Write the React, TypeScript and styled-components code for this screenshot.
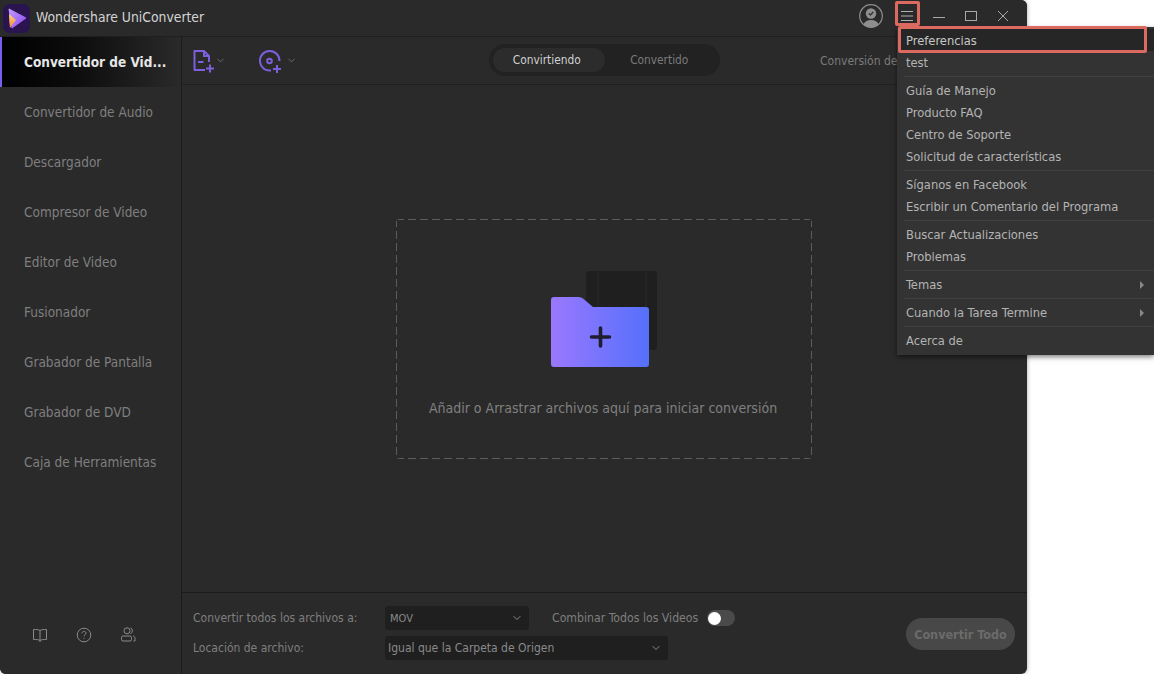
import React from "react";
import styled, { createGlobalStyle } from "styled-components";
import { ChevronDown } from "lucide-react";

const Global = createGlobalStyle`
  html, body { margin: 0; padding: 0; background: #fff; width: 1154px; height: 674px; overflow: hidden; }
  * { box-sizing: border-box; }
  body { font-family: "DejaVu Sans Condensed", "DejaVu Sans", "Noto Sans", sans-serif; font-stretch: condensed; }
`;

const Page = styled.div`
  position: relative;
  width: 1154px;
  height: 674px;
  overflow: hidden;
  background: #fff;
`;
const AppWindow = styled.div`
  width: 1027px;
  height: 674px;
  background: #2a2a2a;
  border-radius: 0 6px 6px 6px;
  box-shadow: 0 0 4px rgba(0, 0, 0, 0.35);
  display: flex;
  flex-direction: column;
  overflow: hidden;
`;
const TitleBar = styled.header`
  height: 37px;
  flex: none;
  display: flex;
  align-items: center;
  border-bottom: 1px solid #1f1f1f;
  background: #2a2a2a;
  color: #d4d4d4;
  font-size: 13.8px;
  padding-left: 2px;
`;
const AppName = styled.span`
  margin-left: 6px;
  flex: 1;
  position: relative;
  top: -1px;
`;
const WinControls = styled.div`
  display: flex;
  align-items: center;
  height: 36px;
  padding: 0 8px 4px 0;
`;
const CtlBtn = styled.div<{ $w: number }>`
  width: ${(p) => p.$w}px;
  height: 30px;
  display: flex;
  align-items: center;
  justify-content: center;
`;
const Body = styled.div`
  flex: 1;
  display: flex;
  min-height: 0;
`;
const Sidebar = styled.nav`
  width: 182px;
  flex: none;
  display: flex;
  flex-direction: column;
  border-right: 1px solid #1b1b1b;
  background: #2a2a2a;
`;
const NavItem = styled.div<{ $active?: boolean }>`
  height: 50px;
  flex: none;
  display: flex;
  align-items: center;
  padding-left: ${(p) => (p.$active ? 22 : 24)}px;
  font-size: ${(p) => (p.$active ? 13.5 : 13.5)}px;
  font-weight: ${(p) => (p.$active ? 700 : 400)};
  color: ${(p) => (p.$active ? "#e6e6e6" : "#7f7f7f")};
  border-left: ${(p) => (p.$active ? "2px solid #7a5cf0" : "none")};
  background: ${(p) => (p.$active ? "linear-gradient(90deg, #000 0%, #0c0c0c 40%, #2a2a2a 100%)" : "transparent")};
  white-space: nowrap;
`;
const SideFoot = styled.div`
  margin-top: auto;
  height: 80px;
  display: flex;
  align-items: flex-start;
  padding: 33px 0 0 32px;
  gap: 28px;
  color: #8a8a8a;
`;
const Main = styled.main`
  flex: 1;
  min-width: 0;
  display: flex;
  flex-direction: column;
`;
const Toolbar = styled.div`
  height: 48px;
  flex: none;
  border-bottom: 1px solid #1f1f1f;
  display: flex;
  align-items: center;
  padding-left: 11px;
  position: relative;
`;
const ToolGroup = styled.div<{ $w: number; $gap: number }>`
  width: ${(p) => p.$w}px;
  display: flex;
  align-items: center;
  gap: ${(p) => p.$gap}px;
  color: #6d6d6d;
`;
const Segment = styled.div`
  margin-left: 168px;
  width: 231px;
  height: 32px;
  background: #222;
  border-radius: 16px;
  display: flex;
  align-items: center;
  padding: 0 4px;
  margin-top: -1px;
`;
const SegItem = styled.div<{ $active?: boolean }>`
  width: 114px;
  height: 24px;
  border-radius: 12px;
  display: flex;
  align-items: center;
  justify-content: center;
  padding-right: ${(p) => (p.$active ? 4 : 2)}px;
  font-size: 11.8px;
  color: ${(p) => (p.$active ? "#d0d0d0" : "#7b7b7b")};
  background: ${(p) => (p.$active ? "#2c2c2c" : "transparent")};
`;
const ConvLabel = styled.span`
  margin-left: 100px;
  font-size: 12px;
  color: #7b7b7b;
  white-space: nowrap;
`;
const Content = styled.div`
  flex: 1;
  display: flex;
  padding: 134px 0 0 214px;
  min-height: 0;
`;
const DropZone = styled.div`
  width: 416px;
  height: 240px;
  border-radius: 4px;
  display: flex;
  flex-direction: column;
  align-items: center;
  padding-top: 52px;
  background:
    repeating-linear-gradient(90deg, #5c5c5c 0 8px, transparent 8px 12px) top left / 100% 1px no-repeat,
    repeating-linear-gradient(90deg, #5c5c5c 0 8px, transparent 8px 12px) bottom left / 100% 1px no-repeat,
    repeating-linear-gradient(180deg, #5c5c5c 0 8px, transparent 8px 12px) top left / 1px 100% no-repeat,
    repeating-linear-gradient(180deg, #5c5c5c 0 8px, transparent 8px 12px) top right / 1px 100% no-repeat;
`;
const FolderSvg = styled.svg`
  margin-left: 2px;
  flex: none;
`;
const DropText = styled.div`
  margin: 33px 2px 0 0;
  font-size: 14px;
  color: #808080;
`;
const Footer = styled.footer`
  height: 82px;
  flex: none;
  border-top: 1px solid #1b1b1b;
  display: flex;
  align-items: center;
  padding: 0 12px 0 11px;
`;
const FootGrid = styled.div`
  display: grid;
  grid-template-columns: 192px 144px auto;
  grid-auto-rows: 24px;
  row-gap: 6px;
  align-items: center;
  flex: 1;
  justify-items: start;
  margin-top: -1px;
`;
const FootLabel = styled.span`
  font-size: 12px;
  color: #7f7f7f;
  white-space: nowrap;
`;
const MergeLabel = styled(FootLabel)`
  font-size: 12.2px;
`;
const Select = styled.div<{ $w: number; $span?: boolean; $pad: number; $size: number }>`
  width: ${(p) => p.$w}px;
  height: 24px;
  background: #1f1f1f;
  border-radius: 3px;
  display: flex;
  align-items: center;
  justify-content: space-between;
  padding: 0 6px 0 ${(p) => p.$pad}px;
  font-size: ${(p) => p.$size}px;
  color: #8a8a8a;
  grid-column: ${(p) => (p.$span ? "2 / 4" : "auto")};
`;
const Merge = styled.div`
  display: flex;
  align-items: center;
  margin-left: 23px;
  gap: 9px;
`;
const Toggle = styled.div`
  width: 28px;
  height: 16px;
  border-radius: 8px;
  background: #4a4a4a;
  display: flex;
  align-items: center;
  padding-left: 1px;
`;
const Knob = styled.div`
  width: 13px;
  height: 13px;
  border-radius: 50%;
  background: #fff;
`;
const ConvertAll = styled.div`
  width: 109px;
  height: 32px;
  border-radius: 16px;
  background: #484848;
  color: #6b6b6b;
  font-size: 12.5px;
  font-weight: 700;
  display: flex;
  align-items: center;
  justify-content: center;
  white-space: nowrap;
  margin-top: 1px;
`;
const Menu = styled.div`
  position: absolute;
  left: 897px;
  top: 27px;
  width: 257px;
  height: 328px;
  background: #333;
  box-shadow: 0 2px 5px rgba(0, 0, 0, 0.5);
  padding: 2px 0 0 3px;
`;
const MenuRow = styled.div<{ $hl?: boolean }>`
  height: 22px;
  display: flex;
  align-items: center;
  justify-content: space-between;
  padding: 1px 10px 0 6px;
  font-size: 12.8px;
  color: ${(p) => (p.$hl ? "#c8c8c8" : "#b4b4b4")};
  background: ${(p) => (p.$hl ? "#262626" : "transparent")};
  white-space: nowrap;
`;
const Sep = styled.div`
  height: 1px;
  background: #3f3f3f;
  margin: 3px 0 2px 4px;
`;
const Arrow = styled.span`
  width: 0;
  height: 0;
  border-left: 4px solid #888;
  border-top: 4px solid transparent;
  border-bottom: 4px solid transparent;
`;
const RedBox = styled.div<{ $l: number; $t: number; $w: number; $h: number }>`
  position: absolute;
  left: ${(p) => p.$l}px;
  top: ${(p) => p.$t}px;
  width: ${(p) => p.$w}px;
  height: ${(p) => p.$h}px;
  border: 3px solid #dc6a60;
  border-radius: 2px;
  pointer-events: none;
`;

const Logo = () => (
  <svg width="28" height="30" viewBox="0 0 28 30">
    <defs>
      <linearGradient id="lg" x1="0" y1="0" x2="1" y2="1">
        <stop offset="0" stopColor="#c29bff" />
        <stop offset="1" stopColor="#8a45f0" />
      </linearGradient>
      <linearGradient id="lo" x1="0" y1="0" x2="0" y2="1">
        <stop offset="0" stopColor="#ffd27a" />
        <stop offset="1" stopColor="#f08a3c" />
      </linearGradient>
    </defs>
    <rect x="1" y="1" width="27" height="29" rx="7" fill="#2a1450" />
    <path d="M7 6 L24 15 L10 25 Z" fill="url(#lg)" strokeLinejoin="round" stroke="url(#lg)" />
    <path d="M7 11 L14 17 L8 25 Q7 18 7 11 Z" fill="url(#lo)" />
  </svg>
);
const UserIcon = () => (
  <svg width="26" height="26" viewBox="0 0 26 26" fill="none">
    <circle cx="13" cy="13" r="11.3" stroke="#8e8e8e" strokeWidth="1.2" />
    <circle cx="13" cy="10.5" r="5.2" fill="#8e8e8e" />
    <path d="M5.5 21.5 Q7 17 13 17 Q19 17 20.5 21.5 Q17 24.3 13 24.3 Q9 24.3 5.5 21.5 Z" fill="#8e8e8e" />
    <path d="M10.8 10.5 L12.5 12 L15.3 9" stroke="#2a2a2a" strokeWidth="1.2" />
  </svg>
);
const Hamburger = () => (
  <svg width="14" height="12" viewBox="0 0 14 12" stroke="#b0b0b0" strokeWidth="1">
    <path d="M1 1.5H13M1 6H13M1 10.5H13" />
  </svg>
);
const MinIcon = () => (
  <svg width="14" height="14" viewBox="0 0 14 14" stroke="#a8a8a8" strokeWidth="1"><path d="M1 8.5H13" /></svg>
);
const MaxIcon = () => (
  <svg width="14" height="12" viewBox="0 0 14 12" fill="none" stroke="#a8a8a8" strokeWidth="1"><rect x="1.5" y="1.5" width="11" height="9" /></svg>
);
const CloseIcon = () => (
  <svg width="14" height="14" viewBox="0 0 14 14" stroke="#a8a8a8" strokeWidth="1"><path d="M2 2L12 12M12 2L2 12" /></svg>
);
const AddFileIcon = () => (
  <svg width="22" height="24" viewBox="0 0 22 24" fill="none" stroke="#7d5fdc" strokeWidth="2">
    <path d="M12 21H1.5V2H11L16 7V13" strokeLinejoin="round" />
    <path d="M11 2V7H16" />
    <path d="M5 13H10.5" />
    <path d="M13 19.5H21M17 15.5V23.5" />
  </svg>
);
const AddDiscIcon = () => (
  <svg width="22" height="24" viewBox="0 0 22 24" fill="none" stroke="#7d5fdc" strokeWidth="2">
    <path d="M12 21.5A9.8 9.8 0 1 1 20.5 12" />
    <circle cx="10.5" cy="12" r="2.3" />
    <path d="M14 20H22M18 16V24" />
  </svg>
);
const BookIcon = () => (
  <svg width="16" height="16" viewBox="0 0 16 16" fill="none" stroke="#8a8a8a">
    <path d="M8 3.5C6.5 2.5 4 2.5 1.5 2.5V12.5C4 12.5 6.5 12.5 8 13.5C9.5 12.5 12 12.5 14.5 12.5V2.5C12 2.5 9.5 2.5 8 3.5ZM8 3.5V15" />
  </svg>
);
const HelpIcon = () => (
  <svg width="16" height="16" viewBox="0 0 16 16" fill="none" stroke="#8a8a8a">
    <circle cx="8" cy="8" r="6.8" />
    <path d="M6 6.3C6 5 7 4.4 8 4.4C9.1 4.4 10 5.1 10 6.2C10 7.6 8 7.7 8 9.3" />
    <path d="M8 10.8V11.8" />
  </svg>
);
const PeopleIcon = () => (
  <svg width="16" height="16" viewBox="0 0 16 16" fill="none" stroke="#8a8a8a">
    <circle cx="7" cy="3.8" r="3" />
    <path d="M10.5 1A3 3 0 0 1 10.5 6.6" />
    <rect x="1.5" y="9" width="10" height="5" rx="1.5" />
    <path d="M13 9C14.3 9.2 15 10.2 15 11.5V14H13.5" />
  </svg>
);
const FolderArt = () => (
  <FolderSvg width="108" height="96" viewBox="0 0 108 96">
    <defs>
      <linearGradient id="fg" x1="0" y1="0" x2="1" y2="0">
        <stop offset="0" stopColor="#9a78ff" />
        <stop offset="1" stopColor="#5570fb" />
      </linearGradient>
    </defs>
    <rect x="35" y="0" width="71" height="79" rx="3" fill="#1f1f1f" />
    <path d="M47 0V70M95 0V70" stroke="#2a2a2a" strokeWidth="1" />
    <path d="M0 29Q0 26 3 26H28Q30 26 32 27.5L42 36H95Q98 36 98 39V93Q98 96 95 96H3Q0 96 0 93Z" fill="url(#fg)" />
    <path d="M49.5 57V75M40.5 66H58.5" stroke="#1f1e30" strokeWidth="3.6" strokeLinecap="round" />
  </FolderSvg>
);

const nav = [
  "Convertidor de Vid...",
  "Convertidor de Audio",
  "Descargador",
  "Compresor de Video",
  "Editor de Video",
  "Fusionador",
  "Grabador de Pantalla",
  "Grabador de DVD",
  "Caja de Herramientas",
];
const menuGroups: { label: string; arrow?: boolean }[][] = [
  [{ label: "Preferencias" }, { label: "test" }],
  [{ label: "Guía de Manejo" }, { label: "Producto FAQ" }, { label: "Centro de Soporte" }, { label: "Solicitud de características" }],
  [{ label: "Síganos en Facebook" }, { label: "Escribir un Comentario del Programa" }],
  [{ label: "Buscar Actualizaciones" }, { label: "Problemas" }],
  [{ label: "Temas", arrow: true }],
  [{ label: "Cuando la Tarea Termine", arrow: true }],
  [{ label: "Acerca de" }],
];

export default function App() {
  return (
    <Page>
      <Global />
      <AppWindow>
        <TitleBar>
          <Logo />
          <AppName>Wondershare UniConverter</AppName>
          <WinControls>
            <CtlBtn $w={40}><UserIcon /></CtlBtn>
            <CtlBtn $w={32}><Hamburger /></CtlBtn>
            <CtlBtn $w={32}><MinIcon /></CtlBtn>
            <CtlBtn $w={32}><MaxIcon /></CtlBtn>
            <CtlBtn $w={32}><CloseIcon /></CtlBtn>
          </WinControls>
        </TitleBar>
        <Body>
          <Sidebar>
            {nav.map((n, i) => (
              <NavItem key={n} $active={i === 0}>{n}</NavItem>
            ))}
            <SideFoot>
              <BookIcon />
              <HelpIcon />
              <PeopleIcon />
            </SideFoot>
          </Sidebar>
          <Main>
            <Toolbar>
              <ToolGroup $w={66} $gap={0}><AddFileIcon /><ChevronDown size={11} /></ToolGroup>
              <ToolGroup $w={62} $gap={5}><AddDiscIcon /><ChevronDown size={11} /></ToolGroup>
              <Segment>
                <SegItem $active>Convirtiendo</SegItem>
                <SegItem>Convertido</SegItem>
              </Segment>
              <ConvLabel>Conversión de</ConvLabel>
            </Toolbar>
            <Content>
              <DropZone>
                <FolderArt />
                <DropText>Añadir o Arrastrar archivos aquí para iniciar conversión</DropText>
              </DropZone>
            </Content>
            <Footer>
              <FootGrid>
                <FootLabel>Convertir todos los archivos a:</FootLabel>
                <Select $w={144} $pad={5} $size={11}>MOV<ChevronDown size={12} /></Select>
                <Merge>
                  <MergeLabel>Combinar Todos los Videos</MergeLabel>
                  <Toggle><Knob /></Toggle>
                </Merge>
                <FootLabel>Locación de archivo:</FootLabel>
                <Select $w={283} $span $pad={3} $size={12}>Igual que la Carpeta de Origen<ChevronDown size={12} /></Select>
              </FootGrid>
              <ConvertAll>Convertir Todo</ConvertAll>
            </Footer>
          </Main>
        </Body>
      </AppWindow>
      <Menu>
        {menuGroups.map((g, i) => (
          <React.Fragment key={i}>
            {i > 0 && <Sep />}
            {g.map((it, j) => (
              <MenuRow key={it.label} $hl={i === 0 && j === 0}>
                {it.label}
                {it.arrow && <Arrow />}
              </MenuRow>
            ))}
          </React.Fragment>
        ))}
      </Menu>
      <RedBox $l={895} $t={1} $w={25} $h={25} />
      <RedBox $l={898} $t={26} $w={249} $h={27} />
    </Page>
  );
}
